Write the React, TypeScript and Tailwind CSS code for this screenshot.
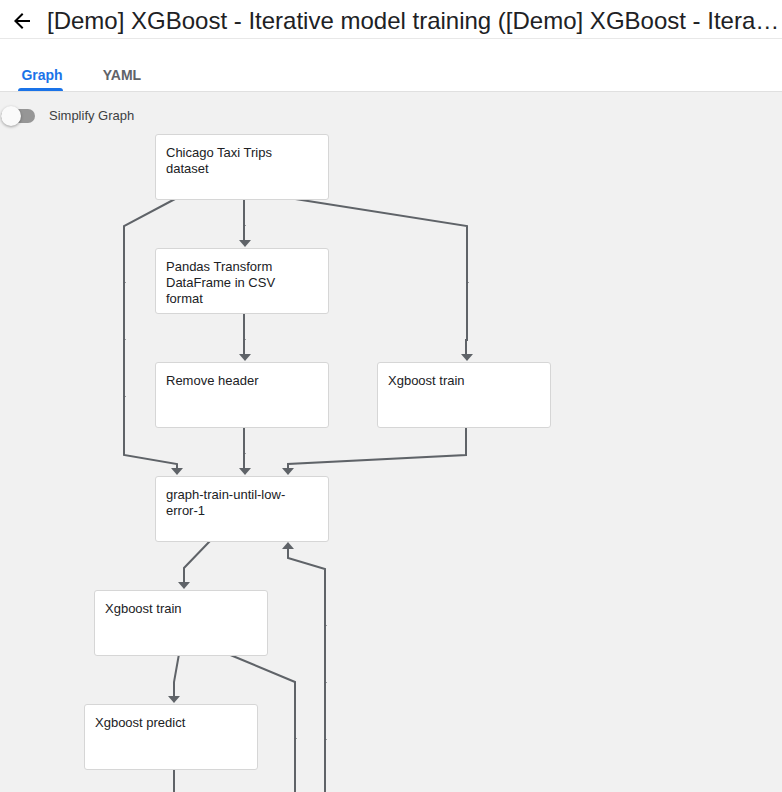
import { useState } from 'react';

type GraphNode = { id: string; label: string; x: number; y: number };
type Edge = { line: string; arrow?: [number, number]; up?: boolean };

const nodes: GraphNode[] = [
  { id: 'dataset', label: 'Chicago Taxi Trips dataset', x: 155, y: 42 },
  { id: 'pandas', label: 'Pandas Transform DataFrame in CSV format', x: 155, y: 156 },
  { id: 'header', label: 'Remove header', x: 155, y: 270 },
  { id: 'train-1', label: 'Xgboost train', x: 377, y: 270 },
  { id: 'loop', label: 'graph-train-until-low-error-1', x: 155, y: 384 },
  { id: 'train-2', label: 'Xgboost train', x: 94, y: 498 },
  { id: 'predict', label: 'Xgboost predict', x: 84, y: 612 },
];

// Polylines in canvas coordinates; arrow is the tip of the head.
const edges: Edge[] = [
  { line: '175,107 124,134 124,363 177,372 177,377', arrow: [177, 383] },
  { line: '244,108 244,149', arrow: [245, 155] },
  { line: '289,106 467,134 467,248 466,248 466,263', arrow: [467, 269] },
  { line: '244,222 244,263', arrow: [245, 269] },
  { line: '244,336 244,377', arrow: [245, 383] },
  { line: '466,336 466,363 288,372 288,377', arrow: [288, 383] },
  { line: '210,449 184,476 184,491', arrow: [184, 497] },
  { line: '325,1000 325,477 288,466 288,457', arrow: [288, 450], up: true },
  { line: '179,562 174,590 174,605', arrow: [174, 611] },
  { line: '228,562 295,590 295,1000' },
  { line: '174,678 174,1000' },
];

const joints: [number, number][] = [
  [124, 191], [124, 248], [124, 305],
  [244, 134], [244, 248], [244, 362],
  [467, 191],
  [325, 534], [325, 591], [325, 648],
  [295, 647],
];

function head([x, y]: [number, number], up?: boolean) {
  const base = up ? y + 7 : y - 7;
  return `${x - 6},${base} ${x + 6},${base} ${x},${y}`;
}

export default function App() {
  const [tab, setTab] = useState('Graph');
  const [simplify, setSimplify] = useState(false);

  return (
    <div className="flex h-screen flex-col bg-white font-['Liberation_Sans',Arial,sans-serif] text-[#202124]">
      <header className="flex h-[39px] shrink-0 items-center border-b border-[#e8e8e8] pl-[10px]">
        <button type="button" aria-label="Back" className="mt-1 mr-[13px] shrink-0 text-black">
          <svg width="24" height="24" viewBox="0 0 24 24" fill="currentColor" aria-hidden="true">
            <path d="M20 11H7.83l5.59-5.59L12 4l-8 8 8 8 1.41-1.41L7.83 13H20v-2z" />
          </svg>
        </button>
        <h1 className="mt-[3px] min-w-0 flex-1 truncate text-2xl leading-8">
          [Demo] XGBoost - Iterative model training ([Demo] XGBoost - Iterative model training)
        </h1>
      </header>

      <div role="tablist" className="flex h-[53px] shrink-0 items-end border-b border-[#e0e0e0] pl-[2px] text-sm font-bold">
        {['Graph', 'YAML'].map((name) => (
          <button
            key={name}
            type="button"
            role="tab"
            aria-selected={tab === name}
            onClick={() => setTab(name)}
            className={`relative flex h-8 w-20 justify-center leading-8 ${
              tab === name ? 'text-[#1a73e8]' : 'text-[#5f6368]'
            }`}
          >
            {name}
            {tab === name && <span className="absolute bottom-0 left-4 h-[3px] w-[45px] rounded-t bg-[#1a73e8]" />}
          </button>
        ))}
      </div>

      <main className="relative min-h-0 flex-1 overflow-hidden bg-[#f1f1f1]">
        <svg className="absolute inset-0 h-full w-full" aria-hidden="true">
          {edges.map((e) => (
            <g key={e.line}>
              <polyline points={e.line} fill="none" stroke="#5f6368" strokeWidth="2" />
              {e.arrow && <polygon points={head(e.arrow, e.up)} fill="#5f6368" />}
            </g>
          ))}
          {joints.map(([x, y]) => (
            <rect key={`${x}-${y}`} x={x - 1} y={y - 1} width="3" height="1" fill="#5f6368" opacity="0.6" />
          ))}
        </svg>

        <label className="relative flex w-fit items-center pt-[14px] text-[13px] leading-5 text-[#3c4043]">
          <input
            type="checkbox"
            role="switch"
            checked={simplify}
            onChange={(e) => setSimplify(e.target.checked)}
            className="peer sr-only"
          />
          <span className="ml-[1px] flex h-5 w-[34px] items-center">
            <span className="h-[14px] w-full rounded-full bg-[#969696]">
              <span
                className={`-mt-[3px] block size-5 rounded-full bg-[#fafafa] shadow-[0_1px_3px_rgba(0,0,0,0.35)] ${
                  simplify ? 'ml-[14px]' : ''
                }`}
              />
            </span>
          </span>
          <span className="ml-[14px]">Simplify Graph</span>
        </label>

        {nodes.map((n) => (
          <button
            key={n.id}
            type="button"
            style={{ left: n.x, top: n.y }}
            className="absolute flex h-[66px] w-[174px] rounded-[3px] border border-[#d6d6d6] bg-white px-[10px] py-[10px] text-left text-[13px] leading-4"
          >
            <span className="w-[124px]">{n.label}</span>
          </button>
        ))}
      </main>
    </div>
  );
}
